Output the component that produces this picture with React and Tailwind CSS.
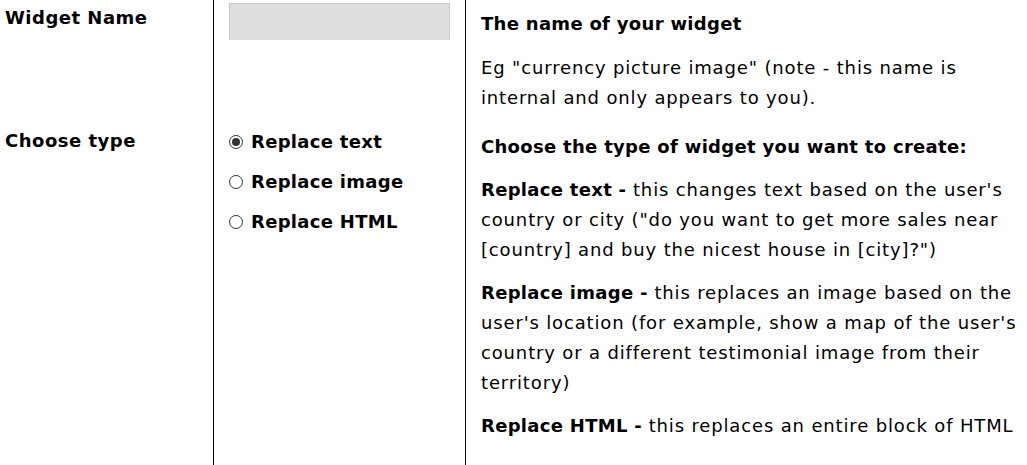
import React from "react";

const font = { fontFamily: '"DejaVu Sans", "Liberation Sans", sans-serif' };

function Radio({ checked, label }) {
  return (
    <div className="flex items-center h-[40px] gap-[8px]">
      <span className="w-[14px] h-[14px] rounded-full border border-[#333] bg-white flex items-center justify-center shrink-0">
        {checked && <span className="w-[8px] h-[8px] rounded-full bg-[#333]" />}
      </span>
      <span className="font-bold text-[18px] text-black tracking-[0.3px]">{label}</span>
    </div>
  );
}

function Lines({ lines }) {
  return lines.map((l, i) => (
    <span key={i} className="block whitespace-nowrap">{l}</span>
  ));
}

function B({ children }) {
  return <b className="font-bold tracking-[0.3px]">{children}</b>;
}

export default function App() {
  return (
    <div style={font} className="w-[1027px] h-[465px] overflow-hidden bg-white text-black text-[18px] leading-[30px] tracking-[0.85px]">
      <div className="grid grid-cols-[213px_1px_251px_1px_1fr] h-full">
        {/* Column 1 */}
        <div className="flex flex-col pl-[5px]">
          <div className="h-[123px] pt-[3px] font-bold tracking-[0.5px]">Widget Name</div>
          <div className="pt-[3px] font-bold tracking-[0.5px]">Choose type</div>
        </div>
        <div className="bg-black" />
        {/* Column 2 */}
        <div className="flex flex-col pl-[15px] pr-[15px]">
          <div className="h-[123px] pt-[3px]">
            <div className="h-[37px] bg-[#dedede] border border-[#c9c9c9] border-b-[#d6dde3]" />
          </div>
          <div className="-mt-[1px]">
            <Radio checked label="Replace text" />
            <Radio label="Replace image" />
            <Radio label="Replace HTML" />
          </div>
        </div>
        <div className="bg-black" />
        {/* Column 3 */}
        <div className="flex flex-col pl-[15px]">
          <div className="h-[123px] pt-[9px] flex flex-col gap-[14px]">
            <p className="font-bold tracking-[0.3px]">The name of your widget</p>
            <p>
              <Lines lines={['Eg "currency picture image" (note - this name is', "internal and only appears to you)."]} />
            </p>
          </div>
          <div className="pt-[9px] flex flex-col gap-[13px]">
            <p className="font-bold tracking-[0.3px]">Choose the type of widget you want to create:</p>
            <p>
              <span className="block whitespace-nowrap"><B>Replace text -</B> this changes text based on the user's</span>
              <Lines lines={['country or city ("do you want to get more sales near', '[country] and buy the nicest house in [city]?")']} />
            </p>
            <p>
              <span className="block whitespace-nowrap"><B>Replace image -</B> this replaces an image based on the</span>
              <Lines lines={["user's location (for example, show a map of the user's", "country or a different testimonial image from their", "territory)"]} />
            </p>
            <p>
              <span className="block whitespace-nowrap"><B>Replace HTML -</B> this replaces an entire block of HTML</span>
            </p>
          </div>
        </div>
      </div>
    </div>
  );
}
